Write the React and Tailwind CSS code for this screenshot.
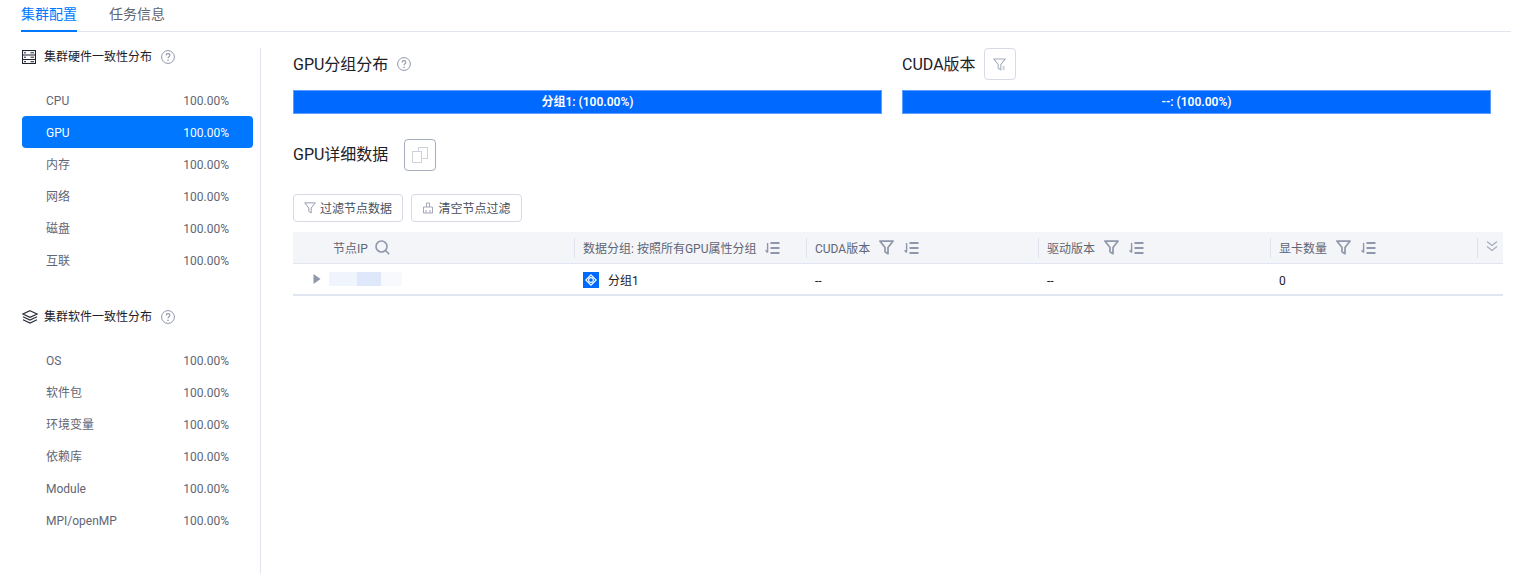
const hardware = ["CPU", "GPU", "内存", "网络", "磁盘", "互联"];
const software = ["OS", "软件包", "环境变量", "依赖库", "Module", "MPI/openMP"];

const Help = ({ size = 14, className = "" }) => (
  <svg width={size} height={size} viewBox="0 0 14 14" fill="none" className={className}>
    <circle cx="7" cy="7" r="6.4" stroke="#8f97aa" strokeWidth="1" />
    <path d="M5.1 5.4C5.1 4.3 6 3.6 7 3.6s1.9.7 1.9 1.7c0 1.4-1.9 1.4-1.9 2.9" stroke="#8f97aa" strokeWidth="1.1" />
    <circle cx="7" cy="10.2" r=".8" fill="#8f97aa" />
  </svg>
);

const ServerIcon = () => (
  <svg width="14" height="14" viewBox="0 0 14 14" fill="none" stroke="#1f232c" strokeWidth="1.1">
    <rect x=".5" y=".5" width="13" height="13" />
    <path d="M.5 5h13M.5 9.5h13" />
    <path d="M2 2.8h2M2 7.2h2M2 11.7h2M8.5 2.8h3.5M8.5 7.2h3.5M8.5 11.7h3.5" strokeWidth="1" />
  </svg>
);

const LayersIcon = () => (
  <svg width="16" height="14" viewBox="0 0 16 14" fill="none" stroke="#2b2f3a" strokeWidth="1.1">
    <path d="M8 .7 15 4 8 7.3 1 4 8 .7Z" />
    <path d="M1 6.8 8 10.1l7-3.3" />
    <path d="M1 9.8 8 13.1l7-3.3" />
  </svg>
);

const FilterIcon = ({ size = 15, color = "#8f97aa", width = 1.6, bar = false }) => (
  <svg width={size} height={size} viewBox="0 0 14 14" fill="none" stroke={color} strokeWidth={width}>
    <path d="M.8 1h12.4L8.4 7v5.8L5.6 11V7L.8 1Z" strokeLinejoin="round" />
    {bar && <path d="M11.4 8.5V13" strokeWidth="2" stroke="#c9cdd8" />}
  </svg>
);

const SortIcon = () => (
  <svg width="15" height="12" viewBox="0 0 15 12" fill="none" stroke="#8f97aa" strokeWidth="2">
    <path d="M2.6 1v9.6M.6 8.2l2 2.4" strokeWidth="1.4" />
    <path d="M5.5 1h9M5.5 6h9M5.5 11h9" />
  </svg>
);

const SidebarItem = ({ name, active }) => (
  <div
    className={`h-8 pt-0.5 flex items-center justify-between pl-6 pr-6 rounded text-xs ${
      active ? "bg-[#0077ff] text-white" : "text-[#5f6675]"
    }`}
  >
    <span>{name}</span>
    <span>100.00%</span>
  </div>
);

const SidebarTitle = ({ icon, title }) => (
  <div className="h-[18px] flex items-center text-xs text-[#1c2029]">
    <span className="w-[22px] flex items-center">{icon}</span>
    <span>{title}</span>
    <Help className="ml-[9px]" />
  </div>
);

const HeaderCell = ({ title, filter, sort, children }) => (
  <div className="flex items-center h-full">
    <div className="h-5 w-px bg-[#dfe3ec]" />
    <span className="ml-2 pt-0.5 text-xs text-[#5f6675]">{title}</span>
    {filter && (
      <span className="ml-[9px] flex">
        <FilterIcon />
      </span>
    )}
    {sort && (
      <span className={filter ? "ml-[10px] flex" : "ml-[9px] flex"}>
        <SortIcon />
      </span>
    )}
    {children}
  </div>
);

const App = () => {
  return (
    <div
      className="w-[1522px] h-[574px] bg-white overflow-hidden"
      style={{ fontFamily: 'Roboto, "Noto Sans CJK SC", sans-serif' }}
    >
      {/* Tabs */}
      <div className="ml-[21px] w-[1490px] h-8 flex gap-8 border-b border-[#e1e5ef] text-sm">
        <div className="h-8 w-14 pt-[5px] text-center text-[#0077ff] border-b-2 border-[#0077ff] leading-[18px]">集群配置</div>
        <div className="pt-[5px] text-[#5f6675] leading-[18px]">任务信息</div>
      </div>

      <div className="flex">
        {/* Sidebar */}
        <div className="w-[261px] h-[526px] mt-4 border-r border-[#e1e5ef] pl-[22px] pr-[7px] shrink-0">
          <SidebarTitle icon={<ServerIcon />} title="集群硬件一致性分布" />
          <div className="mt-[18px]">
            {hardware.map((name) => (
              <SidebarItem key={name} name={name} active={name === "GPU"} />
            ))}
          </div>
          <div className="mt-8">
            <SidebarTitle icon={<LayersIcon />} title="集群软件一致性分布" />
          </div>
          <div className="mt-[18px]">
            {software.map((name) => (
              <SidebarItem key={name} name={name} />
            ))}
          </div>
        </div>

        {/* Main */}
        <div className="ml-8 w-[1210px]">
          <div className="grid grid-cols-[589px_589px] gap-5">
            <div>
              <div className="h-8 mt-4 flex items-center text-base text-[#1c2029]">
                <span className="pt-0.5">GPU分组分布</span>
                <Help className="ml-[9px]" />
              </div>
              <div className="mt-[10px] h-6 bg-[#0069ff] border border-[#5d9dff] text-white text-xs font-semibold flex items-center justify-center">
                分组1: (100.00%)
              </div>
            </div>
            <div>
              <div className="h-8 mt-4 flex items-center text-base text-[#1c2029]">
                <span className="pt-0.5">CUDA版本</span>
                <div className="ml-2 w-8 h-8 border border-[#d5dae6] rounded flex items-center justify-center">
                  <FilterIcon size={13} color="#a3a9b8" width={1.1} bar />
                </div>
              </div>
              <div className="mt-[10px] h-6 bg-[#0069ff] border border-[#5d9dff] text-white text-xs font-semibold flex items-center justify-center">
                --: (100.00%)
              </div>
            </div>
          </div>

          <div className="mt-[25px] h-8 flex items-center text-base text-[#1c2029]">
            <span>GPU详细数据</span>
            <div className="ml-4 w-8 h-8 border border-[#a6adbd] rounded flex items-center justify-center">
              <svg width="16" height="16" viewBox="0 0 16 16" fill="none" stroke="#ccd1dd" strokeWidth="1">
                <rect x="6.5" y=".5" width="9" height="11" />
                <rect x=".5" y="4.5" width="9" height="11" fill="#fff" />
              </svg>
            </div>
          </div>

          <div className="mt-[23px] flex gap-2">
            <div className="h-7 w-[110px] border border-[#d5dae6] rounded-sm flex items-center justify-center gap-1 text-xs text-[#4a505e]">
              <FilterIcon size={12} color="#8f97aa" width={1.1} />
              <span className="pt-0.5">过滤节点数据</span>
            </div>
            <div className="h-7 w-[111px] border border-[#d5dae6] rounded-sm flex items-center justify-center gap-1 text-xs text-[#4a505e]">
              <svg width="12" height="12" viewBox="0 0 12 12" fill="none" stroke="#a3a9b8" strokeWidth="1">
                <path d="M4.5 5V1h3v4M1.5 11V5h9v6h-9ZM4 8v3M8 8v3" />
              </svg>
              <span className="pt-0.5">清空节点过滤</span>
            </div>
          </div>

          {/* Table */}
          <div className="mt-[10px]">
            <div className="h-8 bg-[#f4f5f9] border-b border-[#e1e5ef] grid grid-cols-[281px_232px_232px_232px_207px_26px]">
              <div className="flex items-center pl-10">
                <span className="pt-0.5 text-xs text-[#5f6675]">节点IP</span>
                <svg width="15" height="15" viewBox="0 0 15 15" fill="none" stroke="#8f97aa" strokeWidth="1.6" className="ml-[7px]">
                  <circle cx="6.5" cy="6.5" r="5.5" />
                  <path d="m10.5 10.5 3.6 3.6" />
                </svg>
              </div>
              <HeaderCell title="数据分组: 按照所有GPU属性分组" sort />
              <HeaderCell title="CUDA版本" filter sort />
              <HeaderCell title="驱动版本" filter sort />
              <HeaderCell title="显卡数量" filter sort />
              <div className="flex items-center h-full">
                <div className="h-5 w-px bg-[#dfe3ec]" />
                <svg width="12" height="12" viewBox="0 0 12 12" fill="none" stroke="#a3a9b8" strokeWidth="1.1" className="ml-2 mb-1">
                  <path d="m1 1.5 5 4 5-4M1 6.5l5 4 5-4" />
                </svg>
              </div>
            </div>
            <div className="h-8 pt-1 border-b-2 border-[#e1e5ef] grid grid-cols-[281px_232px_232px_232px_233px] text-xs text-[#1c2029]">
              <div className="flex items-center pl-5">
                <svg width="8" height="10" viewBox="0 0 8 10" fill="#8f97aa" className="mb-1">
                  <path d="M.5 0 7.5 5 .5 10Z" />
                </svg>
                <div className="ml-2 mb-1 flex h-[14px]">
                  <div className="w-7 bg-[#f0f4fd]" />
                  <div className="w-6 bg-[#dfe8fb]" />
                  <div className="w-[21px] bg-[#f8f9fd]" />
                </div>
              </div>
              <div className="flex items-center pl-[9px]">
                <span className="w-4 h-4 mb-0.5 bg-[#0069ff] flex items-center justify-center">
                  <svg width="12" height="12" viewBox="0 0 12 12" fill="none" stroke="#fff" strokeWidth="1.1">
                    <path d="M6 .8 11.2 6 6 11.2.8 6 6 .8Z" />
                    <circle cx="6" cy="6" r="2.4" />
                  </svg>
                </span>
                <span className="ml-[9px]">分组1</span>
              </div>
              <div className="flex items-center pl-[9px]">--</div>
              <div className="flex items-center pl-[9px]">--</div>
              <div className="flex items-center pl-[9px]">0</div>
            </div>
          </div>
        </div>
      </div>
    </div>
  );
};

export default App;
